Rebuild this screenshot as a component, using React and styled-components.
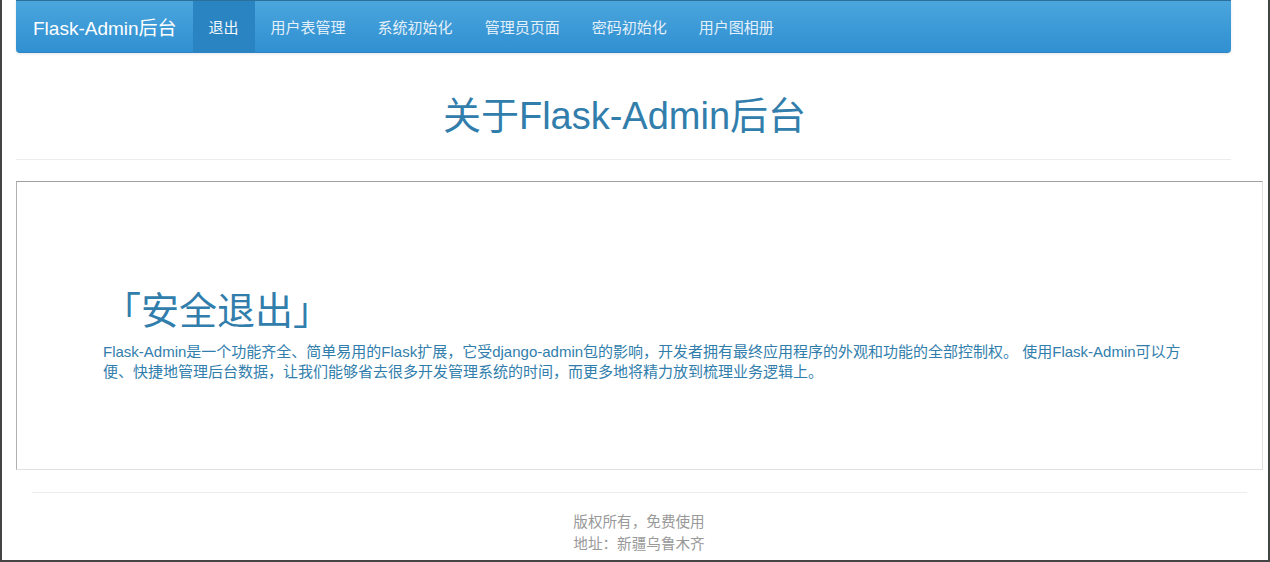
import styled, { createGlobalStyle } from "styled-components";

const GlobalStyle = createGlobalStyle`
  html, body {
    margin: 0;
    padding: 0;
    background: #fff;
  }
  body {
    font-family: "Liberation Sans", "Noto Sans CJK SC", sans-serif;
    color: #555;
  }
`;

const Frame = styled.div`
  box-sizing: border-box;
  height: 562px;
  overflow: hidden;
  border-left: 2px solid #444;
  border-right: 2px solid #444;
  border-bottom: 2px solid #444;
`;

const Navbar = styled.nav`
  display: flex;
  align-items: stretch;
  margin-left: 14px;
  width: 1215px;
  height: 51px;
  background-image: linear-gradient(#4ba6dc, #3a98d6 60%, #3190d1);
  border-top: 1px solid #2b6f9c;
  border-bottom: 1px solid #2a86c6;
  border-radius: 0 0 4px 4px;
  box-shadow: 0 1px 3px rgba(0, 0, 0, 0.1);
`;

const Brand = styled.a`
  display: flex;
  align-items: center;
  padding: 0 16px 0 17px;
  font-size: 19px;
  color: #fff;
  text-decoration: none;
`;

const NavItem = styled.a`
  display: flex;
  align-items: center;
  padding: 0 16px;
  font-size: 15px;
  color: ${(p) => (p.$active ? "#f4f9fd" : "#e3f0fa")};
  background: ${(p) => (p.$active ? "#2a84c2" : "transparent")};
  text-decoration: none;
`;

const Title = styled.h1`
  margin: 42px 0 0;
  width: 1245px;
  text-align: center;
  font-size: 38px;
  line-height: 42px;
  font-weight: normal;
  color: #317eac;
`;

const Rule = styled.hr`
  margin: ${(p) => p.$margin};
  width: 1215px;
  height: 0;
  border: 0;
  border-top: 1px solid #ececec;
`;

const Panel = styled.section`
  box-sizing: border-box;
  margin-left: 14px;
  width: 1247px;
  height: 289px;
  padding: 108px 70px 0 86px;
  border-top: 1px solid #a0a0a0;
  border-left: 1px solid #b0b0b0;
  border-right: 1px solid #e0e0e0;
  border-bottom: 1px solid #e0e0e0;
`;

const PanelHeading = styled.h2`
  margin: 0 0 10px;
  font-size: 38px;
  line-height: 42px;
  font-weight: normal;
  color: #317eac;
`;

const PanelText = styled.p`
  margin: 0;
  font-size: 15px;
  line-height: 20px;
  color: #317eac;
`;

const Footer = styled.footer`
  text-align: center;
  width: 1266px;
  margin-top: 18px;
  padding-left: 4px;
  font-size: 14.6px;
  line-height: 22px;
  color: #999;
`;

const navLinks = ["用户表管理", "系统初始化", "管理员页面", "密码初始化", "用户图相册"];

export default function App() {
  return (
    <Frame>
      <GlobalStyle />
      <Navbar>
        <Brand href="#">Flask-Admin后台</Brand>
        <NavItem href="#" $active>
          退出
        </NavItem>
        {navLinks.map((label) => (
          <NavItem key={label} href="#">
            {label}
          </NavItem>
        ))}
      </Navbar>
      <Title>关于Flask-Admin后台</Title>
      <Rule $margin="22px 0 21px 14px" />
      <Panel>
        <PanelHeading>「安全退出」</PanelHeading>
        <PanelText>
          Flask-Admin是一个功能齐全、简单易用的Flask扩展，它受django-admin包的影响，开发者拥有最终应用程序的外观和功能的全部控制权。
          使用Flask-Admin可以方便、快捷地管理后台数据，让我们能够省去很多开发管理系统的时间，而更多地将精力放到梳理业务逻辑上。
        </PanelText>
      </Panel>
      <Rule $margin="22px 0 0 30px" />
      <Footer>
        版权所有，免费使用
        <br />
        地址：新疆乌鲁木齐
      </Footer>
    </Frame>
  );
}
